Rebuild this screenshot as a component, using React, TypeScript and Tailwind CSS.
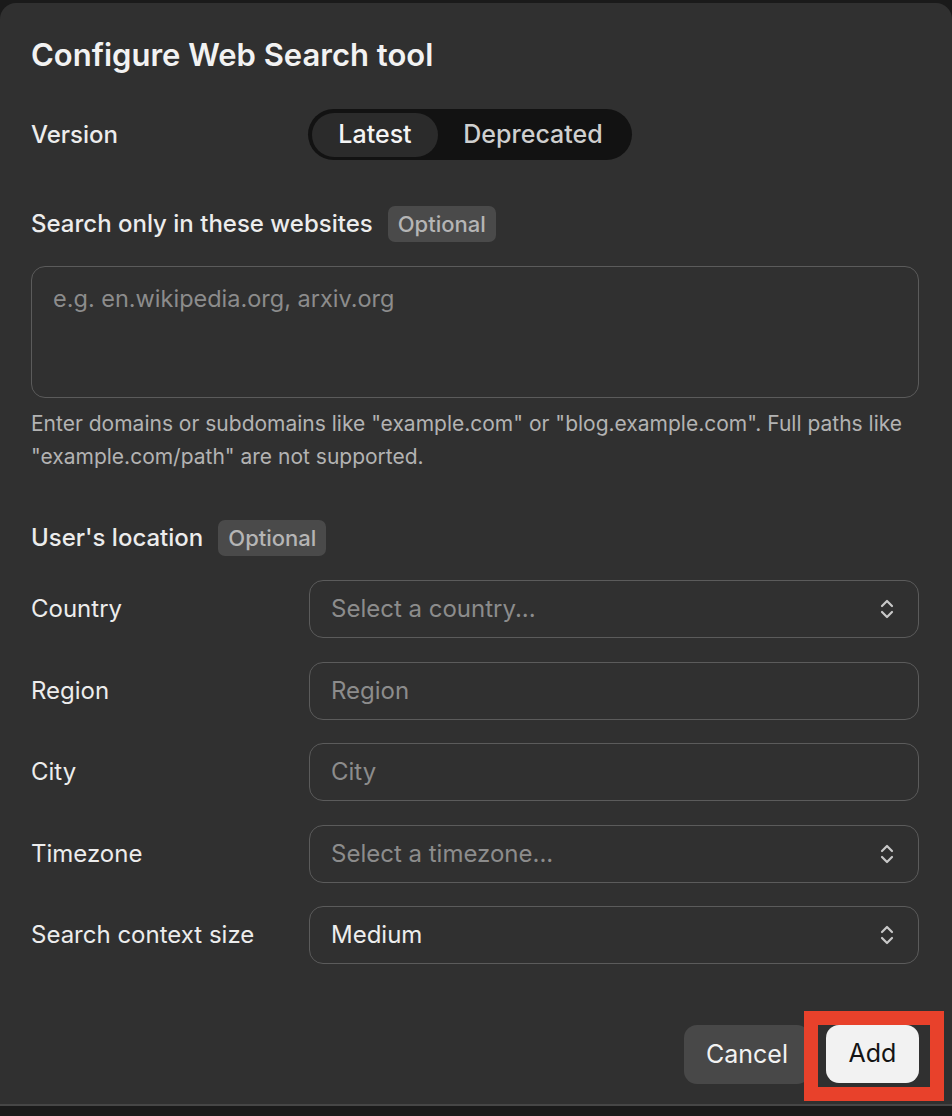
import { ChevronsUpDown } from 'lucide-react';

const labelCls = 'text-[24px] font-medium text-[#ececec] leading-[30px]';
const fieldCls =
    'h-[58px] w-full rounded-[14px] border-[1.5px] border-[#5b5b5b] bg-[#303030] px-[21px] text-[24px] flex items-center justify-between';

function Badge() {
    return (
        <span className="ml-[15px] inline-flex h-[36px] items-center rounded-[7px] bg-[#4a4a4a] px-[10px] text-[22px] font-medium text-[#b5b5b5]">
            Optional
        </span>
    );
}

function Row({ label, children }: { label: string; children: React.ReactNode }) {
    return (
        <div className="flex items-center">
            <div className="w-[278px] shrink-0 text-[24px] leading-[30px] text-[#ececec]">{label}</div>
            <div className="flex-1">{children}</div>
        </div>
    );
}

function SelectField({ text, placeholder }: { text: string; placeholder?: boolean }) {
    return (
        <div className={fieldCls}>
            <span className={placeholder ? 'text-[#8c8c8c]' : 'text-[#ededed]'}>{text}</span>
            <ChevronsUpDown className="-mr-[2px] h-[24px] w-[24px] text-[#c8c8c8]" strokeWidth={2.2} />
        </div>
    );
}

function InputField({ placeholder }: { placeholder: string }) {
    return (
        <div className={fieldCls}>
            <span className="text-[#8c8c8c]">{placeholder}</span>
        </div>
    );
}

export default function App() {
    return (
        <div
            className="h-[1116px] w-[952px] overflow-hidden bg-[#1a1a1a] pt-[3px]"
            style={{ fontFamily: 'Inter, "Noto Sans", sans-serif' }}
        >
            <div className="flex h-[1103px] flex-col rounded-t-[16px] border-b-2 border-[#464646] bg-[#303030] pl-[31px] pr-[33px] pt-[34px]">
                <h1 className="text-[31px] font-semibold leading-[36px] text-[#f2f2f2]">
                    Configure Web Search tool
                </h1>

                <div className="mt-[36px] flex items-center">
                    <div className={`w-[277px] shrink-0 ${labelCls}`}>Version</div>
                    <div className="flex h-[51px] w-[324px] items-center rounded-full bg-[#121212] p-[4px]">
                        <div className="flex h-[44px] w-[126px] items-center justify-center rounded-full bg-[#2b2b2b] text-[25px] font-medium text-[#f4f4f4]">
                            Latest
                        </div>
                        <div className="flex h-[44px] flex-1 items-center justify-center text-[25px] font-medium text-[#cfcfcf]">
                            Deprecated
                        </div>
                    </div>
                </div>

                <div className="mt-[46px] flex h-[36px] items-center">
                    <span className={labelCls}>Search only in these websites</span>
                    <Badge />
                </div>

                <div className="mt-[24px] h-[132px] rounded-[14px] border-[1.5px] border-[#5b5b5b] px-[21px] pt-[14px] text-[23.5px] text-[#8c8c8c]">
                    e.g. en.wikipedia.org, arxiv.org
                </div>

                <p className="mt-[9px] text-[21px] leading-[33px] text-[#b3b3b3]">
                    Enter domains or subdomains like "example.com" or "blog.example.com". Full paths like
                    "example.com/path" are not supported.
                </p>

                <div className="mt-[47px] flex h-[36px] items-center">
                    <span className={labelCls}>User's location</span>
                    <Badge />
                </div>

                <div className="mt-[24px] flex flex-col gap-[23.5px]">
                    <Row label="Country">
                        <SelectField text="Select a country..." placeholder />
                    </Row>
                    <Row label="Region">
                        <InputField placeholder="Region" />
                    </Row>
                    <Row label="City">
                        <InputField placeholder="City" />
                    </Row>
                    <Row label="Timezone">
                        <SelectField text="Select a timezone..." placeholder />
                    </Row>
                    <Row label="Search context size">
                        <SelectField text="Medium" />
                    </Row>
                </div>

                <div className="mt-[61px] flex justify-end gap-[16px]">
                    <button className="h-[59px] rounded-[13px] bg-[#484848] px-[22px] text-[25px] text-[#f2f2f2]">
                        Cancel
                    </button>
                    <div className="relative">
                        <button className="h-[58px] w-[93px] rounded-[13px] bg-[#f2f2f2] text-[25px] text-[#141414]">
                            Add
                        </button>
                        <div className="pointer-events-none absolute -left-[22px] -right-[25px] -top-[14px] -bottom-[17px] border-[14px] border-[#e8412b]" />
                    </div>
                </div>
            </div>
        </div>
    );
}
